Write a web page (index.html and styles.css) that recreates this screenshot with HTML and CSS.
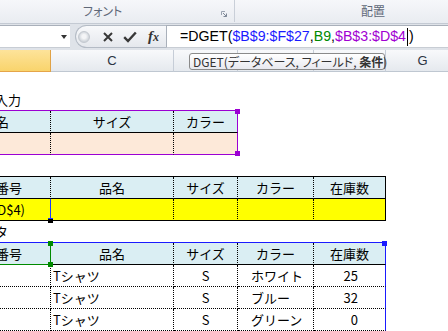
FILE: index.html
```html
<!DOCTYPE html>
<html lang="ja">
<head>
    <meta charset="UTF-8">
    <title>DGET</title>
    <link rel="stylesheet" href="styles.css">
</head>
<body>
    <div class="ribbon">
        <div class="group group-font">
            <span class="group-label">フォント</span>
            <svg class="launcher" width="6" height="6" viewBox="0 0 6 6">
                <path d="M0.5 4V0.5H4" fill="none" stroke="#9aa3b0"/>
                <path d="M2 2L5.5 5.5M5.5 2.5V5.5H2.5" fill="none" stroke="#7d8796"/>
            </svg>
        </div>
        <div class="group group-align">
            <span class="group-label">配置</span>
        </div>
    </div>

    <div class="fbar">
        <div class="namebox"><span class="dropdown"></span></div>
        <div class="fbuttons">
            <span class="fb-circle"></span>
            <svg class="fb-x" width="10" height="10" viewBox="0 0 10 10">
                <path d="M1 1L9 9M9 1L1 9" stroke="#383838" stroke-width="2"/>
            </svg>
            <svg class="fb-check" width="14" height="12" viewBox="0 0 14 12">
                <path d="M1.2 6.2L5 10L12.8 1.5" fill="none" stroke="#383838" stroke-width="2.4"/>
            </svg>
            <span class="fx">f<span class="fx-x">x</span></span>
        </div>
        <div class="finput">=DGET(<span class="ref-blue">$B$9:$F$27</span>,<span class="ref-green">B9</span>,<span class="ref-purple">$B$3:$D$4</span><span class="caret"></span>)</div>
    </div>

    <div class="sheet-view">
        <div class="colheads">
            <div class="ch c-b sel"></div>
            <div class="ch c-c">C</div>
            <div class="ch c-d"></div>
            <div class="ch c-e"></div>
            <div class="ch c-f"></div>
            <div class="ch c-g">G</div>
            <div class="ch c-h"></div>
        </div>
        <div class="tooltip">DGET(データベース, フィールド, <b>条件</b>)</div>

        <div class="sheet">
            <div class="row h16"></div>
            <div class="row">
                <div class="label c-b label-crit">検索条件入力</div>
            </div>

            <!-- 検索条件 -->
            <div class="tbl tbl-crit">
                <div class="row">
                    <div class="cell c-b ctr head">品名</div>
                    <div class="cell c-c ctr head">サイズ</div>
                    <div class="cell c-d ctr head last">カラー</div>
                </div>
                <div class="row">
                    <div class="cell c-b peach"></div>
                    <div class="cell c-c peach"></div>
                    <div class="cell c-d peach last"></div>
                </div>
                <span class="handle h-purple crit-top"></span>
                <span class="handle h-purple crit-bottom"></span>
            </div>

            <div class="row h21"></div>

            <!-- 抽出結果 -->
            <div class="tbl tbl-result">
                <div class="row">
                    <div class="cell c-b ctr head">商品番号</div>
                    <div class="cell c-c ctr head">品名</div>
                    <div class="cell c-d ctr head">サイズ</div>
                    <div class="cell c-e ctr head">カラー</div>
                    <div class="cell c-f ctr head last">在庫数</div>
                </div>
                <div class="row">
                    <div class="cell c-b yellow active">=DGET($B$9:$F$27,B9,$B$3:$D$4)</div>
                    <div class="cell c-c yellow"></div>
                    <div class="cell c-d yellow"></div>
                    <div class="cell c-e yellow"></div>
                    <div class="cell c-f yellow last"></div>
                </div>
                <span class="handle fill-handle"></span>
            </div>

            <div class="row h21">
                <div class="label c-b label-data">在庫データ</div>
            </div>

            <!-- データベース -->
            <div class="tbl tbl-data">
                <div class="row">
                    <div class="cell c-b ctr head b9">商品番号</div>
                    <div class="cell c-c ctr head">品名</div>
                    <div class="cell c-d ctr head">サイズ</div>
                    <div class="cell c-e ctr head">カラー</div>
                    <div class="cell c-f ctr head last">在庫数</div>
                </div>
                <div class="row">
                    <div class="cell c-b"></div>
                    <div class="cell c-c">Tシャツ</div>
                    <div class="cell c-d ctr">S</div>
                    <div class="cell c-e color">ホワイト</div>
                    <div class="cell c-f num last">25</div>
                </div>
                <div class="row">
                    <div class="cell c-b"></div>
                    <div class="cell c-c">Tシャツ</div>
                    <div class="cell c-d ctr">S</div>
                    <div class="cell c-e color">ブルー</div>
                    <div class="cell c-f num last">32</div>
                </div>
                <div class="row">
                    <div class="cell c-b"></div>
                    <div class="cell c-c">Tシャツ</div>
                    <div class="cell c-d ctr">S</div>
                    <div class="cell c-e color">グリーン</div>
                    <div class="cell c-f num last">0</div>
                </div>
                <span class="handle h-blue data-top"></span>
                <span class="handle h-green b9-top"></span>
                <span class="handle h-green b9-bottom"></span>
            </div>
        </div>
    </div>
</body>
</html>
```

FILE: styles.css
```css
* {
    box-sizing: border-box;
}
body {
    margin: 0;
    width: 448px;
    height: 331px;
    overflow: hidden;
    background: #fff;
    font-family: "Noto Sans CJK JP", sans-serif;
}

/* リボン */
.ribbon {
    display: flex;
    height: 24px;
    background: linear-gradient(#f6f7fa, #e9ecf1);
    border-bottom: 1px solid #c4cad3;
}
.group {
    position: relative;
    height: 22px;
}
.group-font {
    width: 235px;
    border-right: 1px solid #c9cfd8;
}
.group-align {
    flex: 1;
}
.group-label {
    position: absolute;
    top: 4px;
    font-size: 12px;
    line-height: 14px;
    color: #5f6878;
    font-feature-settings: "palt";
}
.group-font .group-label { left: 83px; }
.group-align .group-label { left: 126px; }
.launcher {
    position: absolute;
    left: 221px;
    top: 11px;
}

/* 数式バー */
.fbar {
    display: flex;
    height: 26px;
    padding: 1px 0 2px;
    background: #dfe3e9;
}
.namebox {
    width: 70px;
    display: flex;
    align-items: center;
    background: #fff;
    border-top: 1px solid #a9b0ba;
    border-bottom: 1px solid #c8cdd4;
}
.dropdown {
    margin-left: 61px;
    border-left: 3px solid transparent;
    border-right: 3px solid transparent;
    border-top: 4px solid #333;
}
.fbuttons {
    width: 91px;
    margin-left: 5px;
    display: flex;
    align-items: center;
    padding-left: 2px;
    border: 1px solid #b4bbc5;
    border-right: none;
    border-radius: 12px 0 0 12px;
    background: linear-gradient(#f8f9fb, #e5e8ed);
}
.fb-circle {
    width: 12px;
    height: 12px;
    border-radius: 50%;
    border: 1px solid #c3c8cf;
    background: radial-gradient(circle at 50% 45%, #f4f5f7 0, #f4f5f7 2px, #d0d5db 5px);
}
.fb-x { margin-left: 13px; }
.fb-check { margin-left: 10px; }
.fx {
    margin-left: 11px;
    font-family: "Liberation Serif", serif;
    font-style: italic;
    font-weight: bold;
    font-size: 15px;
    line-height: 15px;
    color: #333;
}
.fx-x {
    font-size: 12px;
}
.finput {
    flex: 1;
    padding-left: 13px;
    background: #fff;
    border-left: 1px solid #a9b0ba;
    border-top: 1px solid #a9b0ba;
    border-bottom: 1px solid #c8cdd4;
    font-family: "Liberation Sans", sans-serif;
    font-size: 14.2px;
    line-height: 21px;
    white-space: nowrap;
    color: #000;
}
.ref-blue { color: #1a1aff; }
.ref-green { color: #008a00; }
.ref-purple { color: #a100d2; }
.caret {
    display: inline-block;
    width: 1px;
    height: 18px;
    margin: 0 1px 0 1px;
    background: #000;
    vertical-align: -5px;
}

/* シート表示域（左端の列は画面外） */
.sheet-view {
    position: relative;
    overflow: hidden;
    height: 281px;
}

/* 列見出し */
.colheads {
    display: flex;
    height: 22px;
    margin-left: -58px;
}
.ch {
    flex: none;
    height: 22px;
    display: flex;
    align-items: center;
    justify-content: center;
    background: linear-gradient(#f8f9fb, #e5e9ee);
    border-right: 1px solid #c6cdd7;
    border-bottom: 1px solid #bfc7d1;
    font-family: "Liberation Sans", sans-serif;
    font-size: 13px;
    color: #2b3442;
}
.ch.sel {
    background: linear-gradient(#fde39a, #f9d46c);
    border-right-color: #e0a246;
    border-bottom-color: #e5a549;
}
.c-b { width: 109px; }
.c-c { width: 123px; }
.c-d { width: 64px; }
.c-e { width: 76px; }
.c-f { width: 72px; }
.c-g { width: 74px; }
.c-h { flex: 1; min-width: 60px; }

.tooltip {
    position: absolute;
    left: 189px;
    top: 3px;
    width: 196px;
    height: 17px;
    padding-left: 3px;
    border: 1px solid #8a8a8a;
    border-radius: 3px;
    background: linear-gradient(#ffffff, #e8e9ef);
    font-size: 12px;
    line-height: 15px;
    color: #333;
    white-space: nowrap;
    font-feature-settings: "palt";
}

/* シート */
.sheet {
    margin-left: -58px;
}
.row {
    display: flex;
    height: 22px;
}
.row.h16 { height: 16px; }
.row.h21 { height: 21px; }
.label {
    flex: none;
    display: flex;
    align-items: center;
    justify-content: flex-end;
    white-space: nowrap;
    font-size: 13px;
}
.label-crit { padding-right: 30px; }
.label-data { padding-right: 43px; height: 21px; }

.tbl {
    position: relative;
    width: fit-content;
    border-top: 1px solid #000;
}
.cell {
    flex: none;
    height: 22px;
    display: flex;
    align-items: center;
    padding: 0 2px;
    overflow: hidden;
    white-space: nowrap;
    font-size: 13px;
    color: #000;
    border-right: 1px dotted #000;
    border-bottom: 1px dotted #000;
}
.cell.ctr { justify-content: center; }
.cell.head {
    background: #daeef3;
    border-bottom: 1px solid #000;
}
.cell.color { padding-left: 13px; }
.cell.num {
    justify-content: flex-end;
    padding-right: 27px;
}
.cell.peach { background: #fde9d9; }
.cell.yellow {
    background: #ffff00;
    border-bottom: 1px solid #000;
}
.cell.active {
    justify-content: flex-end;
    padding-right: 25px;
    border-right: 1px solid #1c3cff;
}

.tbl-crit { border-top-color: #9b00d3; }
.tbl-crit .peach { border-bottom: 1px solid #9b00d3; }
.tbl-crit .last { border-right: 1px solid #9b00d3; }
.tbl-result .last { border-right: 1px solid #000; }
.tbl-data { border-top-color: #1a1aff; }
.tbl-data .last { border-right: 1px solid #1a1aff; }
.tbl-data .b9 {
    border-right: 1px solid #008a00;
    border-bottom: 1px solid #008a00;
}

/* 参照範囲のハンドル */
.handle {
    position: absolute;
    width: 5px;
    height: 5px;
}
.h-purple { background: #9b00d3; }
.h-blue { background: #1a1aff; }
.h-green { background: #008a00; }
.crit-top { right: -2px; top: -2px; }
.crit-bottom { right: -2px; bottom: -1px; }
.data-top { right: -1px; top: -2px; }
.b9-top { left: 106px; top: -2px; }
.b9-bottom { left: 106px; top: 19px; }
.fill-handle {
    left: 106px;
    top: 41px;
    background: #000;
    border-top: 1px solid #1c3cff;
}
```
